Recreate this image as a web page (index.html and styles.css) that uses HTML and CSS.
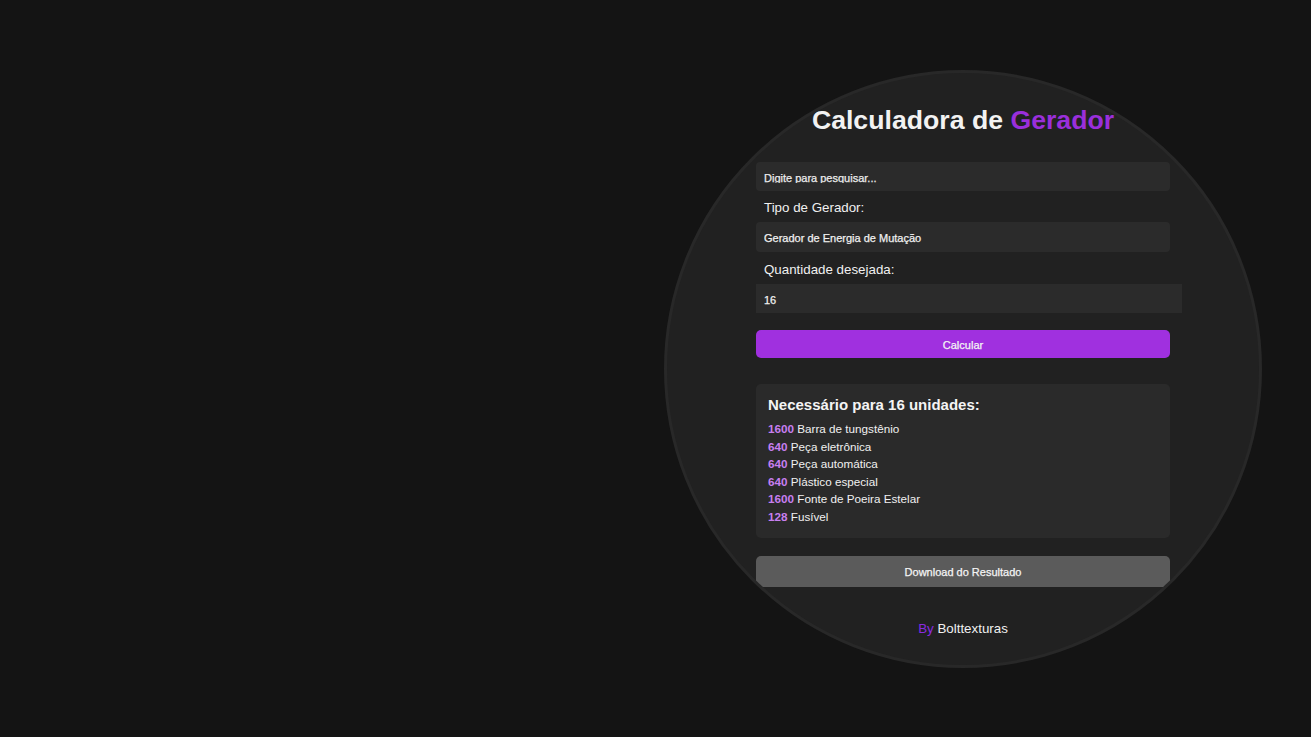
FILE: index.html
```html
<!DOCTYPE html>
<html lang="pt-BR">
<head>
<meta charset="utf-8">
<title>Calculadora de Gerador</title>
<link rel="stylesheet" href="styles.css">
</head>
<body>
<main class="circle">
  <div class="panel">
    <h1 class="title">Calculadora de <span class="accent">Gerador</span></h1>
    <div class="search"><span class="placeholder">Digite para pesquisar...</span></div>
    <label class="label" for="tipo">Tipo de Gerador:</label>
    <select class="field select" id="tipo">
      <option>Gerador de Energia de Mutação</option>
    </select>
    <label class="label" for="qtd">Quantidade desejada:</label>
    <input class="number" id="qtd" type="text" value="16">
    <button class="btn btn-primary" type="button">Calcular</button>
    <section class="result">
      <h2 class="result-title">Necessário para 16 unidades:</h2>
      <ul class="items">
        <li><b class="qty">1600</b> Barra de tungstênio</li>
        <li><b class="qty">640</b> Peça eletrônica</li>
        <li><b class="qty">640</b> Peça automática</li>
        <li><b class="qty">640</b> Plástico especial</li>
        <li><b class="qty">1600</b> Fonte de Poeira Estelar</li>
        <li><b class="qty">128</b> Fusível</li>
      </ul>
    </section>
    <button class="btn btn-download" type="button">Download do Resultado</button>
    <p class="credit"><span class="by">By</span> Bolttexturas</p>
  </div>
</main>
</body>
</html>
```
FILE: styles.css
```css
* { box-sizing: border-box; }

html, body {
  margin: 0;
  height: 100%;
}

body {
  background: #141414;
  font-family: "Liberation Sans", Arial, sans-serif;
  color: #f0f0f0;
  display: flex;
  justify-content: flex-end;
  align-items: center;
  padding-right: 49px;
}

.circle {
  width: 598px;
  height: 598px;
  border-radius: 50%;
  border: 3px solid #282828;
  background: #212121;
  overflow: hidden;
  display: flex;
  justify-content: center;
  padding-top: 32px;
}

.panel {
  width: 414px;
  display: flex;
  flex-direction: column;
}

.title {
  margin: 0 0 26px;
  font-size: 26.67px;
  font-weight: bold;
  text-align: center;
  color: #f2f2f2;
  line-height: normal;
}

.accent { color: #9a2fdb; }

.search {
  height: 29px;
  background: #2b2b2b;
  border-radius: 4px;
  padding: 9px 8px 0;
}

.placeholder {
  display: block;
  height: 12.5px;
  overflow: hidden;
  font-size: 11px;
  line-height: 14px;
  color: #ececec;
  -webkit-text-stroke: 0.25px #ececec;
}

.label {
  display: block;
  margin: 9.4px 0 7.4px 8px;
  font-size: 13.33px;
  line-height: normal;
  color: #f0f0f0;
}

.field, .number {
  font-family: "Liberation Sans", Arial, sans-serif;
  font-size: 11px;
  color: #f0f0f0;
  -webkit-text-stroke: 0.25px #f0f0f0;
  background: #2b2b2b;
  border: 0;
  outline: none;
}

.select {
  appearance: none;
  -webkit-appearance: none;
  width: 100%;
  height: 30px;
  border-radius: 4px;
  padding: 2px 8px 0;
}

.number {
  box-sizing: content-box;
  width: 100%;
  height: 26px;
  padding: 3px 4px 0 8px;
  margin: 0;
  border-radius: 0;
}

.btn {
  font-family: "Liberation Sans", Arial, sans-serif;
  font-size: 11px;
  color: #f4f4f4;
  -webkit-text-stroke: 0.25px #f4f4f4;
  border: 0;
  border-radius: 5px;
  width: 100%;
  cursor: pointer;
}

.btn-primary {
  margin-top: 17px;
  height: 28px;
  padding-top: 2px;
  background: #a030df;
}

.result {
  margin-top: 26px;
  background: #2a2a2a;
  border-radius: 5px;
  padding: 12px 12px 12.5px;
}

.result-title {
  margin: 0 0 7px;
  font-size: 15px;
  font-weight: bold;
  line-height: normal;
  color: #f4f4f4;
}

.items {
  list-style: none;
  margin: 0;
  padding: 0;
  font-size: 11.7px;
  line-height: 17.5px;
  color: #f0f0f0;
}

.qty { color: #c77ff0; }

.btn-download {
  margin-top: 18px;
  height: 31px;
  padding-top: 2px;
  background: #5b5b5b;
}

.credit {
  margin: 34.7px 0 0;
  text-align: center;
  font-size: 13.33px;
  line-height: normal;
  color: #f0f0f0;
}

.by { color: #8a2be2; }
```
